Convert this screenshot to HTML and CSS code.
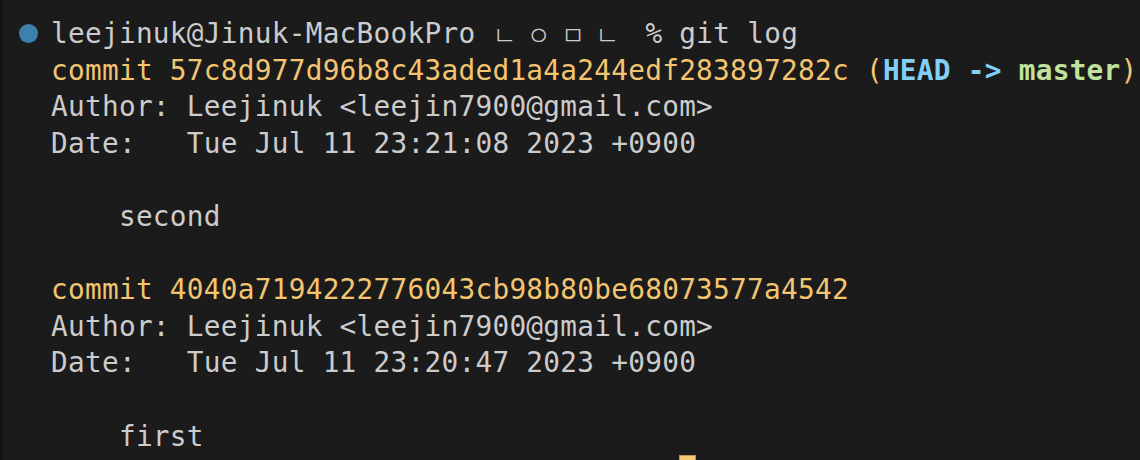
FILE: index.html
```html
<!DOCTYPE html>
<html>
<head>
<meta charset="utf-8">
<link rel="stylesheet" href="styles.css">
</head>
<body>
<div class="term">
  <div class="gutter"></div>
  <div class="lines">
    <div class="line prompt"><span class="dot"></span>leejinuk@Jinuk-MacBookPro <span class="jamo"><span class="j">ㄴ</span><span class="j">ㅇ</span><span class="j">ㅁ</span><span class="j">ㄴ</span></span> % git log</div>
    <div class="line"><span class="y">commit 57c8d977d96b8c43aded1a4a244edf283897282c (</span><span class="b">HEAD -&gt; </span><span class="g">master</span><span class="y">)</span></div>
    <div class="line">Author: Leejinuk &lt;leejin7900@gmail.com&gt;</div>
    <div class="line">Date:   Tue Jul 11 23:21:08 2023 +0900</div>
    <div class="line"> </div>
    <div class="line">    second</div>
    <div class="line"> </div>
    <div class="line"><span class="y">commit 4040a7194222776043cb98b80be68073577a4542</span></div>
    <div class="line">Author: Leejinuk &lt;leejin7900@gmail.com&gt;</div>
    <div class="line">Date:   Tue Jul 11 23:20:47 2023 +0900</div>
    <div class="line"> </div>
    <div class="line">    first</div>
    <div class="line">                                     <span class="cursor"></span></div>
  </div>
</div>
</body>
</html>
```
FILE: styles.css
```css
html, body {
  margin: 0;
  padding: 0;
  background: #1b1b1b;
  overflow: hidden;
}
.term {
  display: flex;
  width: 1140px;
  height: 460px;
  background: #1b1b1b;
  overflow: hidden;
}
.gutter {
  width: 3px;
  flex: none;
  background: #151515;
}
.lines {
  flex: none;
  padding-left: 48px;
  padding-top: 16px;
  font-family: "DejaVu Sans Mono", "Liberation Mono", monospace;
  font-size: 27.75px;
  letter-spacing: 0.27px;
  line-height: 36.6px;
  color: #cccccc;
}
.line {
  height: 36.6px;
  position: relative;
  white-space: pre;
}
.dot {
  position: absolute;
  left: -32px;
  top: 8px;
  width: 19px;
  height: 19px;
  border-radius: 50%;
  background: #3b81ab;
}
.jamo {
  display: inline-block;
  width: 136px;
  padding-left: 0;
  box-sizing: border-box;
  font-family: "Noto Sans CJK KR", sans-serif;
  font-size: 26px;
  font-weight: 300;
  letter-spacing: 0;
  color: #cccccc;
  vertical-align: top;
}
.j {
  display: inline-block;
  width: 16px;
  margin-right: 18.3px;
  text-align: center;
}
.y { color: #f3c570; }
.b { color: #82cff8; font-weight: bold; }
.g { color: #bfe39b; font-weight: bold; }
.cursor {
  display: inline-block;
  width: 17px;
  height: 36px;
  background: #f5ca72;
  box-shadow: inset 0 0 0 1px #b8955a;
  vertical-align: top;
}
```
